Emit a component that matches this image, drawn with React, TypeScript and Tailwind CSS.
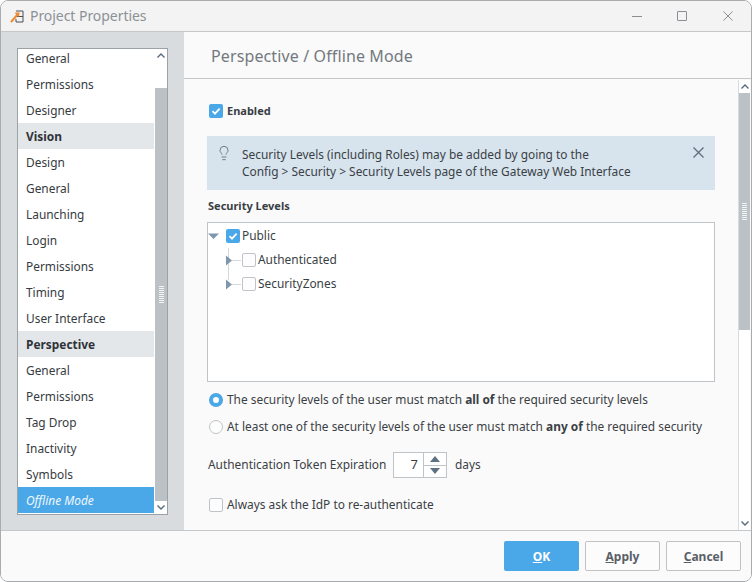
import { Lightbulb } from "lucide-react";

const FONT = "font-['Noto_Sans',sans-serif]";

const NAV = [
  { label: "General" },
  { label: "Permissions" },
  { label: "Designer" },
  { label: "Vision", head: true },
  { label: "Design" },
  { label: "General" },
  { label: "Launching" },
  { label: "Login" },
  { label: "Permissions" },
  { label: "Timing" },
  { label: "User Interface" },
  { label: "Perspective", head: true },
  { label: "General" },
  { label: "Permissions" },
  { label: "Tag Drop" },
  { label: "Inactivity" },
  { label: "Symbols" },
  { label: "Offline Mode", active: true },
];

function Check({ on = false }: { on?: boolean }) {
  if (!on) {
    return <span className="block w-[14px] h-[14px] shrink-0 rounded-[2px] border border-[#bfc4c8] bg-[#fdfdfd]" />;
  }
  return (
    <span className="flex items-center justify-center w-[14px] h-[14px] shrink-0 rounded-[2px] bg-[#4aa8e8]">
      <svg width="10" height="10" viewBox="0 0 10 10" fill="none">
        <path d="M1.5 5.2 L4 7.6 L8.6 2.6" stroke="white" strokeWidth="1.8" />
      </svg>
    </span>
  );
}

function Grip() {
  return (
    <div className="flex flex-col gap-px">
      {Array.from({ length: 9 }).map((_, i) => (
        <span key={i} className="block w-[5px] h-px bg-[#f4f5f6]" />
      ))}
    </div>
  );
}

function Arrow({ up = false }: { up?: boolean }) {
  return (
    <div className="flex items-center justify-center w-full h-[13px] shrink-0 bg-white">
      <svg width="8" height="5" viewBox="0 0 8 5" fill="none">
        <path d={up ? "M0.5 4.5 L4 1 L7.5 4.5" : "M0.5 0.5 L4 4 L7.5 0.5"} stroke="#566a7c" strokeWidth="1.4" />
      </svg>
    </div>
  );
}

function Cross({ size, color, width = 1 }: { size: number; color: string; width?: number }) {
  return (
    <svg width={size} height={size} viewBox={`0 0 ${size} ${size}`} fill="none" className="shrink-0">
      <path d={`M0.5 0.5 L${size - 0.5} ${size - 0.5} M${size - 0.5} 0.5 L0.5 ${size - 0.5}`} stroke={color} strokeWidth={width} />
    </svg>
  );
}

function TreeChild({ label, last = false }: { label: string; last?: boolean }) {
  return (
    <div className="flex items-center h-[24px]">
      <svg width="16" height="24" viewBox="0 0 16 24" className="shrink-0 ml-[18px]">
        <path d={last ? "M2.5 0 V8" : "M2.5 0 V24"} stroke="#d3d8dc" />
        <path d="M6 12.5 H15" stroke="#d3d8dc" />
        <path d="M0 7.5 L6 12.5 L0 17.5 Z" fill="#7f97ad" />
      </svg>
      <Check />
      <span className="ml-[2px] text-[#3a3f45]">{label}</span>
    </div>
  );
}

export default function App() {
  return (
    <div className={`${FONT} w-[752px] h-[582px] overflow-hidden flex flex-col rounded-lg border border-[#a9acaf] bg-[#fafafa] text-[11.9px] text-[#3a3f45]`}>
      {/* Title bar */}
      <div className="flex items-center h-[31px] shrink-0 pl-[9px] bg-[#f3f3f3] border-b border-[#c4c8cb]">
        <svg width="15" height="15" viewBox="0 0 15 15" fill="none" className="shrink-0">
          <path d="M6 2 H13 V13 H6 V10" stroke="#4a4f55" strokeWidth="1" />
          <path d="M6 7.5 H13" stroke="#4a4f55" strokeWidth="1" />
          <path d="M1 13 L8 5" stroke="#f08a2c" strokeWidth="2" />
          <path d="M4.5 3.8 L9.5 3.2 L9 8 Z" fill="#f08a2c" />
        </svg>
        <span className="ml-[5px] -mt-[2px] text-[14px] tracking-[-0.05px] text-[#8c9196]">Project Properties</span>
        <div className="ml-auto flex items-center">
          <span className="block w-[10px] h-px mr-[35px] bg-[#8a8e92]" />
          <span className="block w-[10px] h-[10px] mr-[36px] rounded-[1px] border border-[#8a8e92]" />
          <span className="mr-[18px] flex">
            <Cross size={10} color="#8a8e92" />
          </span>
        </div>
      </div>

      {/* Body */}
      <div className="flex flex-1 min-h-0">
        <aside className="w-[183px] shrink-0 bg-[#d8dcdf] pl-[16px] pt-[16px]">
          <div className="flex w-[151px] h-[467px] border border-[#9ca1a6] bg-white">
            <div className="flex-1 min-w-0 overflow-hidden -mt-[4px]">
              {NAV.map((n, i) => (
                <div
                  key={i}
                  className={`flex items-center h-[26px] pl-[8px] pt-[2px] ${
                    n.active
                      ? "bg-[#4aa8e8] italic text-[#eef7fd]"
                      : n.head
                        ? "bg-[#e4e7ea] font-bold text-[#2f3338]"
                        : "text-[#363b41]"
                  }`}
                >
                  {n.label}
                </div>
              ))}
            </div>
            <div className="flex flex-col w-[12px] shrink-0 ml-px bg-white">
              <Arrow up />
              <div className="h-[26px] shrink-0" />
              <div className="flex flex-1 items-center justify-center bg-[#bcc1c5]">
                <Grip />
              </div>
              <Arrow />
            </div>
          </div>
        </aside>

        <main className="flex flex-col flex-1 min-w-0">
          <div className="flex items-center h-[47px] shrink-0 pl-[27px] pt-[2px] border-b border-[#c4c8cb] text-[16px] tracking-[0.12px] text-[#73797f]">
            Perspective / Offline Mode
          </div>
          <div className="flex flex-1 min-h-0">
            <div className="flex-1 min-w-0 pl-[23px] pr-[23px]">
              <div className="flex items-center h-[14px] mt-[25px] ml-[2px] gap-[4px]">
                <Check on />
                <span className="text-[11px] font-bold text-[#3a3f45]">Enabled</span>
              </div>

              <div className="flex h-[54px] mt-[18px] bg-[#d7e4ed] pl-[9px] pr-[11px]">
                <Lightbulb size={16} strokeWidth={1.5} className="mt-[9px] shrink-0 text-[#6f7d88]" />
                <div className="ml-[10px] pt-[10px] leading-[17px] text-[#3a3f45]">
                  <div>Security Levels (including Roles) may be added by going to the</div>
                  <div>Config &gt; Security &gt; Security Levels page of the Gateway Web Interface</div>
                </div>
                <span className="ml-auto mt-[11px] flex h-[11px]">
                  <Cross size={11} color="#5f6e7b" width={1.3} />
                </span>
              </div>

              <div className="mt-[8px] ml-px h-[16px] leading-[16px] text-[11px] font-bold">Security Levels</div>

              <div className="h-[160px] mt-[8px] pt-px border border-[#bfc4c8] bg-white text-[#3a3f45]">
                <div className="flex items-center h-[24px]">
                  <svg width="18" height="24" viewBox="0 0 18 24" className="shrink-0">
                    <path d="M0 9.5 H11 L5.5 15 Z" fill="#7f97ad" />
                  </svg>
                  <Check on />
                  <span className="ml-[2px]">Public</span>
                </div>
                <TreeChild label="Authenticated" />
                <TreeChild label="SecurityZones" last />
              </div>

              <div className="flex items-center h-[16px] mt-[10px] ml-[2px] gap-[4px]">
                <span className="flex items-center justify-center w-[14px] h-[14px] shrink-0 rounded-full bg-[#4aa8e8]">
                  <span className="block w-[6px] h-[6px] rounded-full bg-white" />
                </span>
                <span>
                  The security levels of the user must match <b>all of</b> the required security levels
                </span>
              </div>
              <div className="flex items-center h-[16px] mt-[11px] ml-[2px] gap-[4px]">
                <span className="block w-[14px] h-[14px] shrink-0 rounded-full border border-[#bfc4c8] bg-[#fdfdfd]" />
                <span className="whitespace-nowrap">
                  At least one of the security levels of the user must match <b>any of</b> the required security
                </span>
              </div>

              <div className="flex items-center h-[26px] mt-[17px] ml-px">
                <span className="w-[185px] shrink-0 whitespace-nowrap">Authentication Token Expiration</span>
                <div className="flex h-[26px] w-[54px] border border-[#bfc4c8] bg-white">
                  <div className="flex flex-1 items-center justify-end pr-[5px] text-[13px]">7</div>
                  <div className="flex flex-col w-[23px] border-l border-[#bfc4c8]">
                    <div className="flex flex-1 items-center justify-center border-b border-[#bfc4c8]">
                      <svg width="10" height="6" viewBox="0 0 10 6"><path d="M5 0 L10 6 H0 Z" fill="#5d7182" /></svg>
                    </div>
                    <div className="flex flex-1 items-center justify-center">
                      <svg width="10" height="6" viewBox="0 0 10 6"><path d="M0 0 H10 L5 6 Z" fill="#5d7182" /></svg>
                    </div>
                  </div>
                </div>
                <span className="ml-[8px]">days</span>
              </div>

              <div className="flex items-center h-[16px] mt-[19px] ml-[2px] gap-[4px]">
                <Check />
                <span>Always ask the IdP to re-authenticate</span>
              </div>
            </div>

            <div className="flex flex-col w-[12px] shrink-0 mt-px mr-px bg-white border-l border-[#d8dcdf]">
              <Arrow up />
              <div className="flex h-[237px] shrink-0 items-center justify-center bg-[#bcc1c5]">
                <Grip />
              </div>
              <div className="flex-1" />
              <Arrow />
            </div>
          </div>
        </main>
      </div>

      {/* Footer */}
      <div className="flex items-start justify-end gap-[6px] h-[51px] shrink-0 pt-[10px] pr-[10px] border-t border-[#c4c8cb] bg-[#fafafa] text-[12px] font-bold">
        <button className="w-[75px] h-[30px] pt-px rounded-[2px] bg-[#4aa8e8] text-white">
          <u>O</u>K
        </button>
        <button className="w-[75px] h-[30px] pt-px rounded-[2px] border border-[#bfc1c3] bg-[#fcfcfd] text-[#5a6067]">
          <u>A</u>pply
        </button>
        <button className="w-[75px] h-[30px] pt-px rounded-[2px] border border-[#bfc1c3] bg-[#fcfcfd] text-[#5a6067]">
          <u>C</u>ancel
        </button>
      </div>
    </div>
  );
}
